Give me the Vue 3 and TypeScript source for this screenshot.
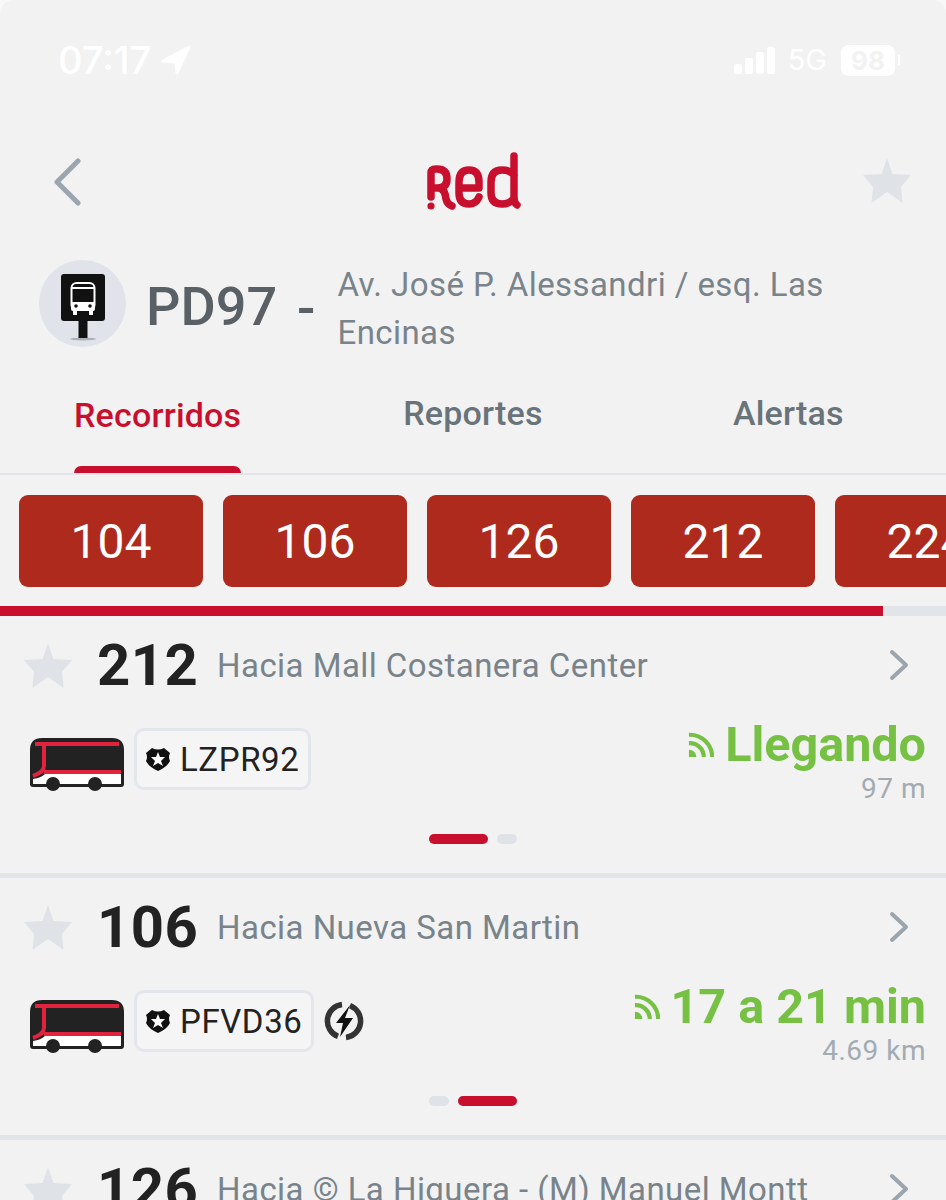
<template>
  <div class="page">
    <div class="status">
      <div class="status-left">
        <span class="clock">07:17</span>
        <svg class="arrow" width="31" height="30" viewBox="0 0 31 30"><path d="M29 2 L3 16 L16 17 L17 28 Z" fill="#fff" stroke="#fff" stroke-width="3" stroke-linejoin="round" /></svg>
      </div>
      <div class="status-right">
        <div class="signal">
          <i v-for="h in [10, 16, 22, 27]" :key="h" :style="{ height: h + 'px' }"></i>
        </div>
        <span class="net">5G</span>
        <span class="battery">98</span>
      </div>
    </div>

    <header class="nav">
      <svg class="back" width="30" height="48" viewBox="0 0 30 48"><path d="M26 3 L5 24 L26 45" fill="none" stroke="#9aa5ad" stroke-width="5" stroke-linecap="round" stroke-linejoin="round" /></svg>
      <svg class="logo" width="96" height="62" viewBox="0 0 96 62">
        <g fill="none" stroke="#c8102e" stroke-width="7.5" stroke-linecap="round" stroke-linejoin="round">
          <path d="M6 47 V23 Q6 19 11 19 H12 Q22 19 22 29 Q22 38 12 38 H7 M14 38 Q20 39 21 49 Q22 54 27 56" />
          <path d="M34 38 H54 V32 Q54 20 44 20 Q34 20 34 32 V43 Q34 54 44 54 Q51 54 54 47" />
          <path d="M89 6 V48 Q89 53 92 55 M89 25 Q85 20 77 20 Q66 20 66 32 V43 Q66 54 77 54 Q85 54 89 48" />
        </g>
        <circle cx="6" cy="56" r="3.6" fill="#c8102e" />
      </svg>
      <svg class="fav" width="48" height="46" viewBox="0 0 48 46"><path :d="starPath" fill="#dfe3e8" /></svg>
    </header>

    <section class="stop">
      <div class="stop-badge">
        <svg width="60" height="72" viewBox="0 0 60 72">
          <ellipse cx="30" cy="65" rx="13" ry="1.5" fill="#a9afb5" />
          <rect x="8" y="0" width="44" height="47" rx="3" fill="#111" />
          <rect x="25.5" y="46" width="9" height="18" fill="#111" />
          <rect x="18.5" y="9" width="23" height="27" rx="5" fill="none" stroke="#fff" stroke-width="2" />
          <path d="M18 14 H42" stroke="#fff" stroke-width="2" />
          <path d="M18 28 H42 V35 Q42 37 40 37 H20 Q18 37 18 35 Z" fill="#fff" />
          <circle cx="23" cy="32" r="1.8" fill="#111" />
          <circle cx="37" cy="32" r="1.8" fill="#111" />
          <rect x="20" y="37" width="4" height="4" fill="#fff" />
          <rect x="36" y="37" width="4" height="4" fill="#fff" />
        </svg>
      </div>
      <span class="stop-code">PD97</span>
      <span class="stop-dash">-</span>
      <p class="stop-name">Av. José P. Alessandri / esq. Las Encinas</p>
    </section>

    <nav class="tabs">
      <div class="tab tab--active"><span class="tab-label">Recorridos<span class="tab-mark"></span></span></div>
      <div class="tab">Reportes</div>
      <div class="tab">Alertas</div>
    </nav>

    <div class="chips">
      <div v-for="c in chips" :key="c" class="chip">{{ c }}</div>
    </div>
    <div class="scroll-track"><div class="scroll-fill"></div></div>

    <article v-for="(r, i) in routes" :key="r.num" class="route">
      <div class="route-top">
        <svg class="route-star" width="48" height="46" viewBox="0 0 48 46"><path :d="starPath" fill="#dfe3e8" /></svg>
        <span class="route-num">{{ r.num }}</span>
        <span class="route-dest">{{ r.dest }}</span>
        <svg class="chev" width="22" height="34" viewBox="0 0 22 34"><path d="M4 4 L18 17 L4 30" fill="none" stroke="#9aa5ad" stroke-width="4" stroke-linecap="round" stroke-linejoin="round" /></svg>
      </div>

      <div v-if="r.plate" class="route-mid">
        <svg class="bus" width="96" height="54" viewBox="0 0 96 54">
          <path d="M1 13 Q1 1 13 1 H83 Q95 1 95 13 V47 Q95 50 92 50 H4 Q1 50 1 47 Z" fill="#222" />
          <path d="M4 47 V42 Q12 41 16 37 H92 V47 Z" fill="#fff" />
          <path d="M6 7 H90 M15 7 V29 Q15 35 4 39 M15 35 H92" fill="none" stroke="#e2233f" stroke-width="4" />
          <circle cx="24" cy="47" r="7" fill="#222" />
          <circle cx="66" cy="47" r="7" fill="#222" />
        </svg>
        <div class="plate">
          <svg width="26" height="26" viewBox="0 0 26 26">
            <path d="M7 2 Q13 5 19 2 L25 7 Q23 11 25 15 Q22 21 13 25 Q4 21 1 15 Q3 11 1 7 Z" fill="#111" />
            <path :d="smallStar" fill="#fff" />
          </svg>
          <span>{{ r.plate }}</span>
        </div>
        <svg v-if="r.electric" class="bolt" width="40" height="40" viewBox="0 0 40 40">
          <path d="M18 3.6 A16.5 16.5 0 0 0 14 35.4 M22 36.4 A16.5 16.5 0 0 0 26 4.6" fill="none" stroke="#333" stroke-width="5.5" />
          <path d="M26 4 L12 22 H19 L16 36 L29 17 H21 Z" fill="#111" />
        </svg>
        <div class="eta">
          <div class="eta-main">
            <svg width="26" height="26" viewBox="0 0 28 28">
              <path d="M1 3 A24 24 0 0 1 26 27 M1 12 A15 15 0 0 1 17 27" fill="none" stroke="#76c043" stroke-width="4.5" />
              <path d="M1 19 A8 8 0 0 1 9 27 H1 Z" fill="#76c043" />
            </svg>
            <span>{{ r.eta }}</span>
          </div>
          <div class="eta-dist">{{ r.dist }}</div>
        </div>
      </div>

      <div v-if="r.plate" class="dots">
        <span v-for="n in 2" :key="n" :class="['dot', { 'dot--on': n - 1 === r.page }]"></span>
      </div>
      <div v-if="i < routes.length - 1" class="rule"></div>
    </article>
  </div>
</template>

<script setup lang="ts">
interface Route {
  num: string;
  dest: string;
  plate?: string;
  electric?: boolean;
  eta?: string;
  dist?: string;
  page?: number;
}

const starPath = "M24 1 L29.5 17 L48 18 L38 30 L39.5 46 L24 35 L8.5 46 L10 30 L0 18 L18.5 17 Z";
const smallStar = "M13 6 L15 11 L20 11 L16 15 L18 20 L13 17 L8 20 L10 15 L6 11 L11 11 Z";

const chips = ["104", "106", "126", "212", "224"];

const routes: Route[] = [
  { num: "212", dest: "Hacia Mall Costanera Center", plate: "LZPR92", eta: "Llegando", dist: "97 m", page: 0 },
  { num: "106", dest: "Hacia Nueva San Martin", plate: "PFVD36", electric: true, eta: "17 a 21 min", dist: "4.69 km", page: 1 },
  { num: "126", dest: "Hacia © La Higuera - (M) Manuel Montt" },
];
</script>

<style>
html,
body {
  margin: 0;
  background: #f8f8f8;
}
</style>

<style scoped>
.page {
  width: 946px;
  height: 1200px;
  overflow: hidden;
  background: #f2f2f3;
  border-radius: 14px 14px 0 0;
  font-family: Roboto, "Liberation Sans", sans-serif;
}

.status {
  height: 122px;
  box-sizing: border-box;
  padding: 40px 51px 0 58px;
  display: flex;
  justify-content: space-between;
  align-items: flex-start;
  color: #fff;
}

.status-left {
  display: flex;
  align-items: center;
  gap: 9px;
}

.clock {
  font-family: Inter, sans-serif;
  font-size: 38px;
  font-weight: 500;
  line-height: 40px;
}

.status-right {
  display: flex;
  align-items: center;
  padding-top: 4px;
}

.signal {
  display: flex;
  align-items: flex-end;
  gap: 3px;
  height: 28px;
}

.signal i {
  width: 8px;
  background: #fff;
  border-radius: 2px;
}

.net {
  margin-left: 13px;
  font-family: Inter, sans-serif;
  font-size: 29px;
  line-height: 32px;
}

.battery {
  position: relative;
  margin-left: 14px;
  width: 54px;
  height: 31px;
  border-radius: 8px;
  background: #fff;
  color: #f2f2f3;
  font-family: Inter, sans-serif;
  font-size: 26px;
  font-weight: 700;
  line-height: 31px;
  text-align: center;
}

.battery::after {
  content: "";
  position: absolute;
  left: 57px;
  top: 10px;
  width: 2px;
  height: 10px;
  background: #fff;
}

.nav {
  height: 133px;
  box-sizing: border-box;
  padding: 14px 35px 0 52px;
  display: flex;
  justify-content: space-between;
  align-items: flex-start;
}

.back {
  margin-top: 22px;
}

.logo {
  margin: 14px 0 0 1px;
}

.fav {
  margin-top: 21px;
}

.stop {
  display: flex;
  align-items: center;
  height: 97px;
  padding-left: 39px;
  box-sizing: border-box;
  color: #596066;
}

.stop-badge {
  width: 87px;
  height: 87px;
  border-radius: 50%;
  background: #e0e4ea;
  display: flex;
  justify-content: center;
  padding-top: 14px;
  box-sizing: border-box;
  flex: none;
}

.stop-code {
  margin: 5px 0 0 20px;
  font-size: 54px;
  font-weight: 500;
}

.stop-dash {
  margin: 9px 0 0 20px;
  font-size: 54px;
  font-weight: 500;
}

.stop-name {
  margin: 11px 0 0 22px;
  width: 510px;
  font-size: 33px;
  line-height: 48px;
  letter-spacing: 0.43px;
  color: #79838a;
}

.tabs {
  height: 123px;
  box-sizing: border-box;
  border-bottom: 2px solid #e1e5ea;
  display: flex;
  padding-top: 39px;
}

.tab {
  flex: 1;
  text-align: center;
  font-size: 34px;
  font-weight: 500;
  line-height: 44px;
  letter-spacing: 0.2px;
  color: #69737a;
}

.tab--active {
  color: #c8102e;
  padding-top: 2px;
}

.tab-label {
  position: relative;
  display: inline-block;
}

.tab-mark {
  position: absolute;
  left: 0;
  right: 0;
  top: 73px;
  height: 7px;
  border-radius: 7px 7px 0 0;
  background: #c8102e;
}

.chips {
  display: flex;
  gap: 20px;
  padding: 20px 0 0 19px;
  overflow: hidden;
}

.chip {
  flex: none;
  width: 184px;
  height: 92px;
  border-radius: 9px;
  background: #ad2a1c;
  color: #fff;
  font-size: 48px;
  line-height: 94px;
  text-align: center;
}

.scroll-track {
  height: 10px;
  margin-top: 19px;
  background: #e1e5ea;
}

.scroll-fill {
  width: 883px;
  height: 100%;
  background: #c8102e;
}

.route {
  height: 262px;
}

.route-top {
  height: 98px;
  display: flex;
  align-items: center;
  padding: 0 36px 0 24px;
}

.route-num {
  margin-left: 25px;
  font-size: 58px;
  font-weight: 700;
  width: 120px;
  letter-spacing: 0.5px;
  color: #222;
}

.route-dest {
  flex: 1;
  font-size: 33px;
  letter-spacing: 0.45px;
  color: #79838a;
}

.route-mid {
  display: flex;
  align-items: center;
  height: 96px;
  margin-top: 2px;
  padding: 0 20px 0 29px;
}

.plate {
  margin: 0 0 10px 9px;
  height: 62px;
  box-sizing: border-box;
  padding: 0 9px 0 8px;
  display: flex;
  align-items: center;
  gap: 9px;
  border: 3px solid #e3e6eb;
  border-radius: 10px;
  background: #f5f5f6;
  font-size: 33px;
  letter-spacing: 0.6px;
  color: #222;
}

.bolt {
  margin: 0 0 10px 10px;
}

.eta {
  margin: 0 0 6px auto;
  text-align: right;
}

.eta-main {
  display: flex;
  align-items: center;
  justify-content: flex-end;
  gap: 11px;
  font-size: 48.5px;
  font-weight: 700;
  line-height: 54px;
  color: #76c043;
}

.eta-dist {
  margin-top: 2px;
  font-size: 28px;
  line-height: 30px;
  letter-spacing: 0.5px;
  color: #a3abb2;
}

.dots {
  display: flex;
  justify-content: center;
  gap: 9px;
  margin-top: 22px;
}

.dot {
  width: 20px;
  height: 10px;
  border-radius: 5px;
  background: #dfe3e8;
}

.dot--on {
  width: 59px;
  background: #c8102e;
}

.rule {
  height: 5px;
  margin-top: 29px;
  background: #e1e5ea;
}
</style>
